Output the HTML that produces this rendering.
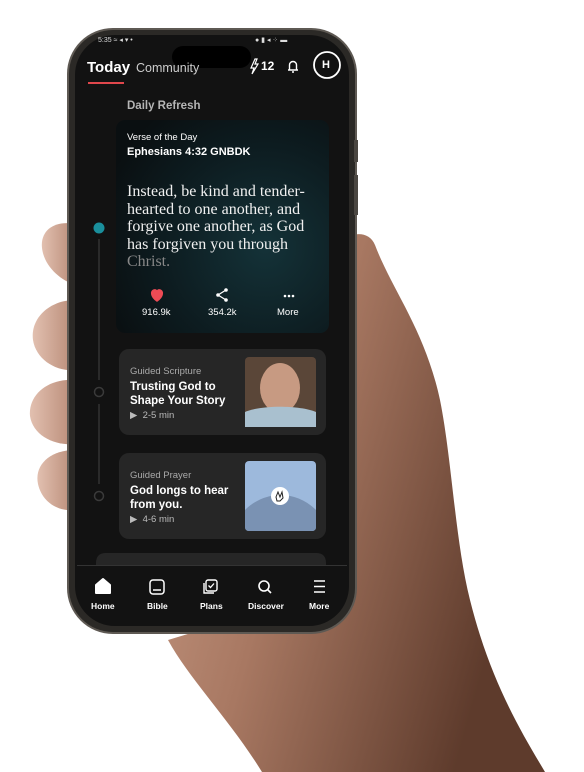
<!DOCTYPE html>
<html><head><meta charset="utf-8"><style>
*{margin:0;padding:0;box-sizing:border-box}
body{width:584px;height:772px;background:#fff;position:relative;overflow:hidden;font-family:"Liberation Sans",sans-serif}
.a{position:absolute}
.t{color:#fff;white-space:nowrap}
</style></head><body>
<svg class="a" style="left:0;top:0" width="584" height="772">
<defs>
<linearGradient id="sk" x1="0" y1="0" x2="1" y2="0.4">
<stop offset="0" stop-color="#c99c86"/><stop offset="0.45" stop-color="#a87862"/><stop offset="1" stop-color="#5e3b2c"/></linearGradient>
<linearGradient id="sk2" x1="0" y1="0" x2="1" y2="0">
<stop offset="0" stop-color="#e2c0b0"/><stop offset="1" stop-color="#b88a76"/></linearGradient>
</defs>
<path d="M330 250 C345 232 368 228 375 245 C392 290 425 330 440 400 C452 460 455 540 470 600 C490 680 520 730 545 772 L262 772 C230 720 190 680 168 640 L300 600 Z" fill="url(#sk)"/>
<path d="M75 224 C55 220 40 230 42 248 C44 266 60 280 75 285 Z" fill="url(#sk2)"/>
<path d="M75 300 C50 300 30 318 33 340 C36 360 57 372 75 370 Z" fill="url(#sk2)"/>
<path d="M75 380 C48 378 28 395 30 416 C33 436 55 446 75 444 Z" fill="url(#sk2)"/>
<path d="M75 450 C50 450 34 465 38 484 C42 502 58 512 75 510 Z" fill="url(#sk2)"/>
<rect x="67" y="28" width="290" height="606" rx="46" fill="#5e5953"/>
<rect x="69" y="30" width="286" height="602" rx="44" fill="#2b2926"/>
<rect x="75" y="35" width="274" height="591" rx="40" fill="#121212"/>
<rect x="354" y="140" width="4" height="22" fill="#4a4641"/>
<rect x="354" y="175" width="4" height="40" fill="#4a4641"/>
<rect x="172" y="46" width="79" height="22" rx="11" fill="#000"/>
<defs><radialGradient id="vc" cx="0.7" cy="0.6" r="0.8"><stop offset="0" stop-color="#143238"/><stop offset="0.6" stop-color="#0d1c20"/><stop offset="1" stop-color="#0a0f11"/></radialGradient></defs>
<rect x="116" y="120" width="213" height="213" rx="9" fill="url(#vc)"/>
<circle cx="99" cy="228" r="5.5" fill="#1a8f9c"/>
<line x1="99" y1="239" x2="99" y2="380" stroke="#333" stroke-width="1.5"/>
<circle cx="99" cy="392" r="4.5" fill="none" stroke="#3a3a3a" stroke-width="1.5"/>
<line x1="99" y1="404" x2="99" y2="484" stroke="#333" stroke-width="1.5"/>
<circle cx="99" cy="496" r="4.5" fill="none" stroke="#3a3a3a" stroke-width="1.5"/>
<rect x="119" y="349" width="207" height="86" rx="10" fill="#262626"/>
<rect x="119" y="453" width="207" height="86" rx="10" fill="#262626"/>
<path d="M96 565 V563 Q96 553 106 553 H316 Q326 553 326 563 V565 Z" fill="#262626"/>
<rect x="245" y="357" width="71" height="70" rx="4" fill="#5a4638"/>
<ellipse cx="280" cy="388" rx="20" ry="25" fill="#c79a82"/>
<path d="M245 427 L245 412 C260 405 300 405 316 412 L316 427 Z" fill="#a9c0cf"/>
<rect x="245" y="461" width="71" height="70" rx="4" fill="#9db9dc"/>
<path d="M245 510 C265 490 296 490 316 510 L316 527 Q316 531 312 531 L249 531 Q245 531 245 527 Z" fill="#7a92b3"/>
<circle cx="280" cy="496" r="9" fill="#fff"/>
<path d="M276 497 l2-5 2 5 2-5 1 6 -3 3 h-3z" fill="none" stroke="#222" stroke-width="1"/>
<line x1="77" y1="565.5" x2="347" y2="565.5" stroke="#333"/>
<path d="M96 585 L103 579 L110 585 L110 593 L96 593 Z" fill="#fff" stroke="#fff" stroke-linejoin="round" stroke-width="2"/>
<rect x="150" y="580" width="14" height="14" rx="3" fill="none" stroke="#fff" stroke-width="1.5"/>
<line x1="153" y1="590" x2="161" y2="590" stroke="#fff" stroke-width="1.5"/>
<rect x="206" y="580" width="11" height="11" rx="2" fill="none" stroke="#fff" stroke-width="1.4"/>
<path d="M204 583 V593 H214" fill="none" stroke="#fff" stroke-width="1.4"/>
<path d="M208.5 585.5 l2 2 3.5-4" fill="none" stroke="#fff" stroke-width="1.3"/>
<circle cx="264" cy="586" r="5" fill="none" stroke="#fff" stroke-width="1.6"/>
<line x1="268" y1="590" x2="271" y2="593" stroke="#fff" stroke-width="1.6"/>
<path d="M314 581 h11 M314 586.5 h11 M314 592 h11" stroke="#fff" stroke-width="1.6"/>
<path d="M255 59 L251 68 L254 68 L252 74 L258 64 L255 64 L257 59Z" fill="none" stroke="#fff" stroke-width="1.2"/>
<path d="M288 70 h10 M289.5 70 v-5 a3.5 3.5 0 0 1 7 0 v5 M292 72 h2" fill="none" stroke="#fff" stroke-width="1.4"/>
<circle cx="327" cy="65" r="13" fill="#111" stroke="#fff" stroke-width="1.8"/>
<rect x="88" y="82" width="36" height="2" fill="#e0474c"/>
<path d="M157 301 C150 296 151 291 154 290 C156 289.5 157 291 157 292 C157 291 158 289.5 160 290 C163 291 164 296 157 301Z" fill="#ee4b55" stroke="#ee4b55" stroke-width="1.5"/>
<circle cx="218" cy="295" r="1.8" fill="#fff"/><circle cx="226" cy="290" r="1.8" fill="#fff"/><circle cx="226" cy="300" r="1.8" fill="#fff"/>
<path d="M218 295 L226 290 M218 295 L226 300" stroke="#fff" stroke-width="1.3"/>
<circle cx="285" cy="296" r="1.3" fill="#fff"/><circle cx="289" cy="296" r="1.3" fill="#fff"/><circle cx="293" cy="296" r="1.3" fill="#fff"/>
<text x="98" y="42" fill="#ddd" font-size="7" font-family="Liberation Sans">5:35 ≈ ◂ ▾ •</text>
<text x="255" y="42" fill="#ddd" font-size="7" font-family="Liberation Sans">● ▮ ◂ ⁘ ▬</text>
</svg>
<div class="a t" style="left:87px;top:59px;font-size:15px;font-weight:bold">Today</div>
<div class="a t" style="left:136px;top:61px;font-size:12.5px;color:#ccc">Community</div>
<div class="a t" style="left:261px;top:59px;font-size:12px;font-weight:bold">12</div>
<div class="a t" style="left:322px;top:59px;font-size:11px;font-weight:bold">H</div>
<div class="a t" style="left:127px;top:100px;font-size:11.5px;color:#b5b5b5;font-weight:bold">Daily Refresh</div>
<div class="a t" style="left:127px;top:132px;font-size:9.5px">Verse of the Day</div>
<div class="a t" style="left:127px;top:146px;font-size:11px;font-weight:bold">Ephesians 4:32 GNBDK</div>
<div class="a t" style="left:127px;top:183px;font-family:'Liberation Serif',serif;font-size:16px;line-height:17.5px;color:#f0f0f0">Instead, be kind and tender-<br>hearted to one another, and<br>forgive one another, as God<br>has forgiven you through<br><span style="color:#888">Christ.</span></div>
<div class="a t" style="left:142px;top:307px;font-size:9.5px">916.9k</div>
<div class="a t" style="left:208px;top:307px;font-size:9.5px">354.2k</div>
<div class="a t" style="left:277px;top:307px;font-size:9.5px">More</div>
<div class="a t" style="left:130px;top:366px;font-size:9.5px;color:#aaa">Guided Scripture</div>
<div class="a t" style="left:130px;top:380px;font-size:11.5px;font-weight:bold;line-height:14px">Trusting God to<br>Shape Your Story</div>
<div class="a t" style="left:130px;top:410px;font-size:9.5px;color:#bbb">▶&nbsp; 2-5 min</div>
<div class="a t" style="left:130px;top:470px;font-size:9.5px;color:#aaa">Guided Prayer</div>
<div class="a t" style="left:130px;top:484px;font-size:11.5px;font-weight:bold;line-height:14px">God longs to hear<br>from you.</div>
<div class="a t" style="left:130px;top:514px;font-size:9.5px;color:#bbb">▶&nbsp; 4-6 min</div>
<div class="a t" style="left:91px;top:601px;font-size:8.5px;font-weight:bold">Home</div>
<div class="a t" style="left:147px;top:601px;font-size:8.5px;font-weight:bold">Bible</div>
<div class="a t" style="left:200px;top:601px;font-size:8.5px;font-weight:bold">Plans</div>
<div class="a t" style="left:248px;top:601px;font-size:8.5px;font-weight:bold">Discover</div>
<div class="a t" style="left:309px;top:601px;font-size:8.5px;font-weight:bold">More</div>
</body></html>
